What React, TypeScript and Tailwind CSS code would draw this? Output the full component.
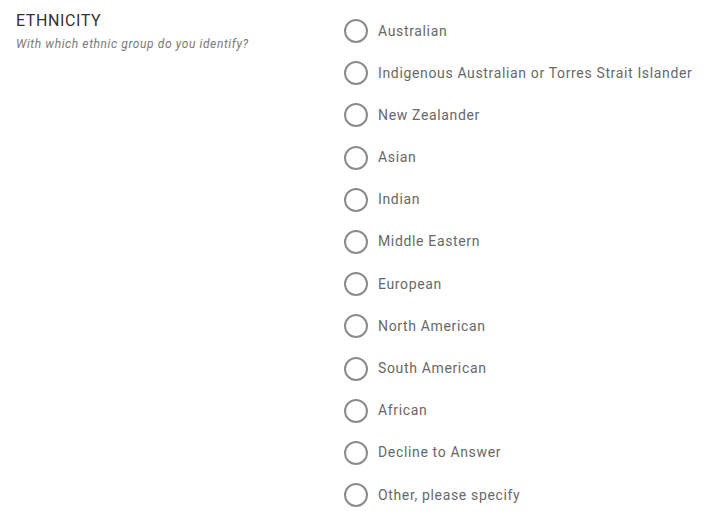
const options = [
  "Australian",
  "Indigenous Australian or Torres Strait Islander",
  "New Zealander",
  "Asian",
  "Indian",
  "Middle Eastern",
  "European",
  "North American",
  "South American",
  "African",
  "Decline to Answer",
  "Other, please specify",
];

export default function App() {
  return (
    <div className="flex h-[526px] w-[720px] bg-white font-['Roboto',sans-serif]">
      <div className="w-[344px] shrink-0 pl-4 pt-[11px]">
        <h2 className="text-[16px] leading-[20px] tracking-[0.6px] text-[#333333]">ETHNICITY</h2>
        <p className="mt-[5px] text-[12px] italic leading-[16px] tracking-[0.6px] text-[#7a7a7a]">
          With which ethnic group do you identify?
        </p>
      </div>
      <div className="flex flex-col gap-[18.2px] pt-[19px]">
        {options.map((label) => (
          <label key={label} className="flex h-6 items-center gap-[10px]">
            <span className="h-6 w-6 shrink-0 rounded-full border-2 border-[#8c8c8c]" />
            <span className="text-[14px] tracking-[0.65px] text-[#686868]">{label}</span>
          </label>
        ))}
      </div>
    </div>
  );
}
